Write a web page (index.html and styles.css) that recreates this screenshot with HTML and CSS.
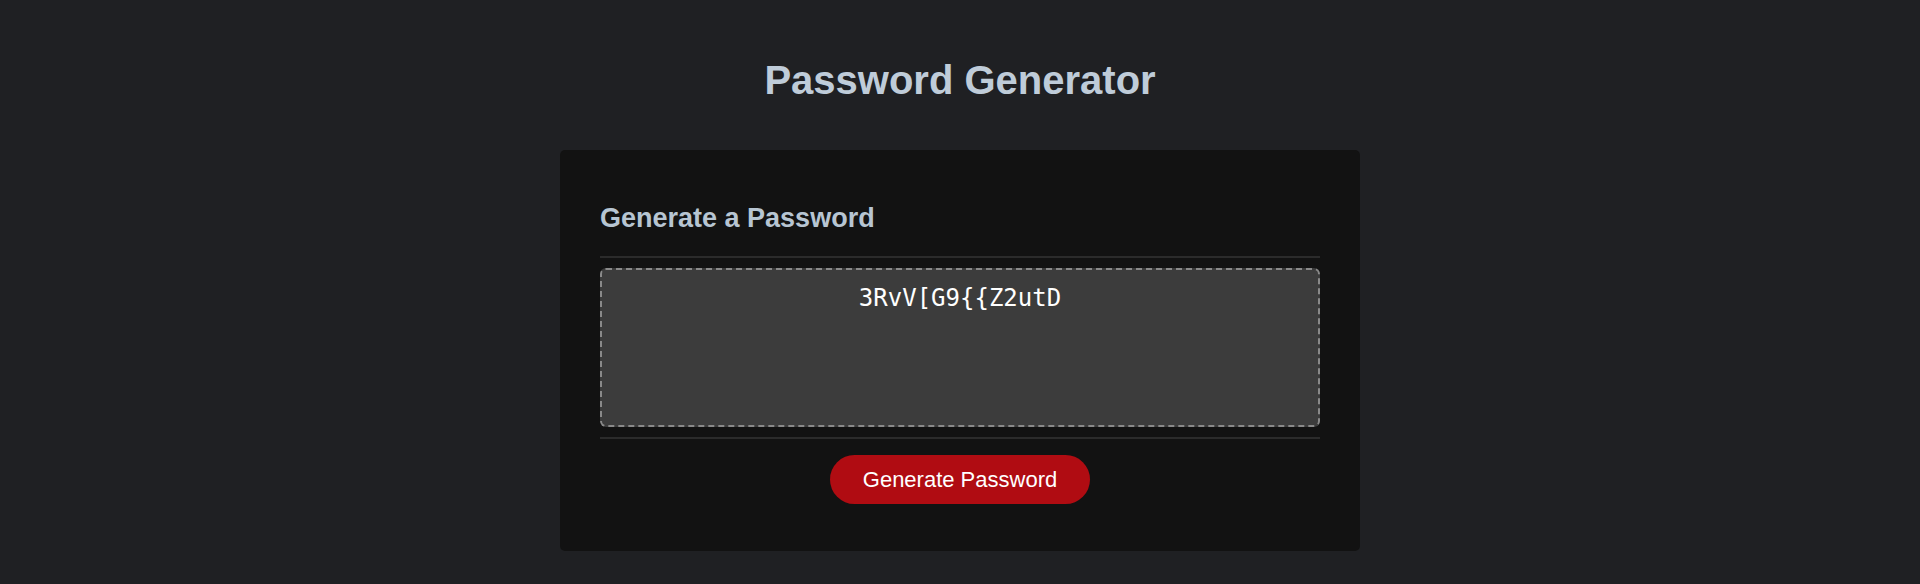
FILE: index.html
```html
<!DOCTYPE html>
<html lang="en">
<head>
<meta charset="utf-8">
<title>Password Generator</title>
<link rel="stylesheet" href="styles.css">
</head>
<body>
  <div class="wrapper">
    <header class="page-header">
      <h1>Password Generator</h1>
    </header>
    <div class="card">
      <div class="card-header">
        <h2>Generate a Password</h2>
      </div>
      <div class="card-body">
        <textarea readonly class="password" aria-label="Generated Password">3RvV[G9{{Z2utD</textarea>
      </div>
      <div class="card-footer">
        <button class="btn">Generate Password</button>
      </div>
    </div>
  </div>
</body>
</html>
```

FILE: styles.css
```css
* {
  box-sizing: border-box;
}

html, body {
  margin: 0;
  padding: 0;
  background: #1f2023;
  font-family: "Liberation Sans", Arial, Helvetica, sans-serif;
}

.wrapper {
  display: flex;
  flex-direction: column;
  align-items: center;
  padding-top: 57px;
}

.page-header h1 {
  margin: 0;
  font-size: 40px;
  line-height: 46px;
  font-weight: 700;
  color: #bfccd9;
  text-align: center;
}

.card {
  width: 800px;
  margin-top: 47px;
  background: #121212;
  border-radius: 5px;
  padding: 53px 40px 47px;
}

.card-header {
  padding-bottom: 22px;
  border-bottom: 2px solid #2b2b2b;
}

.card-header h2 {
  margin: 0;
  font-size: 27px;
  line-height: 31px;
  font-weight: 700;
  color: #b7c5d2;
}

.card-body {
  padding: 10px 0 10px;
  border-bottom: 2px solid #2b2b2b;
}

.password {
  display: block;
  width: 100%;
  height: 159px;
  margin: 0;
  padding: 14px 10px;
  background: #3c3c3c;
  border: 2px dashed #8a8a8a;
  border-radius: 6px;
  color: #ffffff;
  font-family: "DejaVu Sans Mono", "Liberation Mono", monospace;
  font-size: 24px;
  text-align: center;
  resize: none;
  outline: none;
}

.card-footer {
  display: flex;
  justify-content: center;
  padding-top: 16px;
}

.btn {
  height: 49px;
  padding: 0 33px;
  border: none;
  border-radius: 25px;
  background: #b00c12;
  color: #ffffff;
  font-family: "Liberation Sans", Arial, Helvetica, sans-serif;
  font-size: 22px;
  cursor: pointer;
}
```
